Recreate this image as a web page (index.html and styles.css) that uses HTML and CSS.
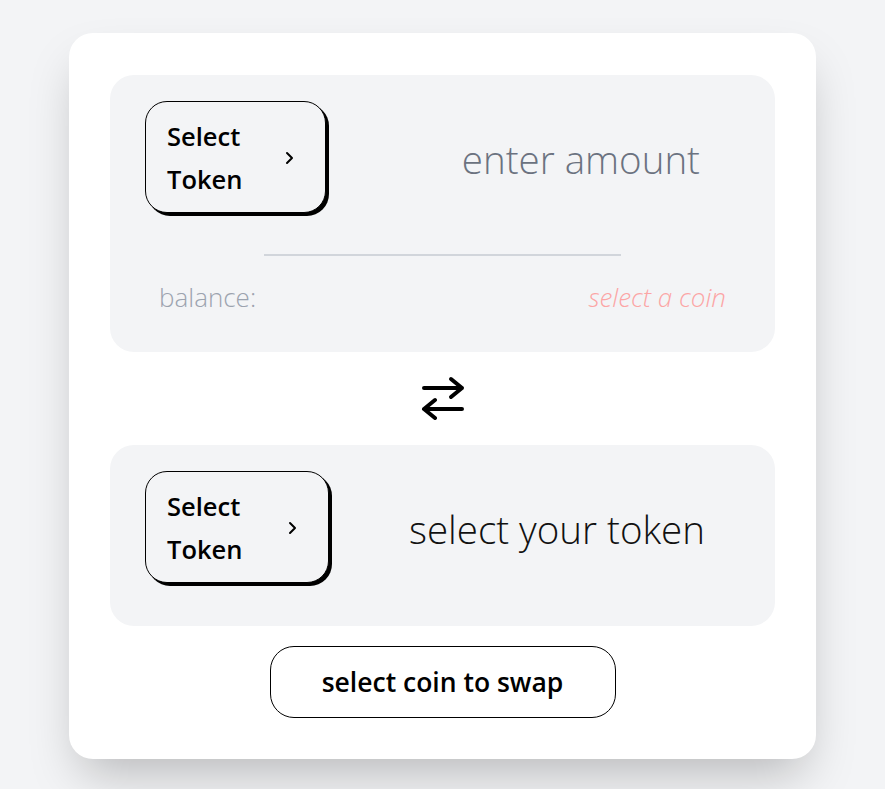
FILE: index.html
```html
<!DOCTYPE html>
<html lang="en">
<head>
<meta charset="utf-8">
<title>Swap</title>
<link rel="stylesheet" href="styles.css">
</head>
<body>
<div class="page">
  <div class="card">
    <div class="panel panel-from">
      <div class="panel-top">
        <button class="token-btn token-btn-a">
          <span class="token-label">Select<br>Token</span>
          <svg class="chev" width="10" height="14" viewBox="0 0 10 14"><path d="M2 2l5 5-5 5" fill="none" stroke="#000" stroke-width="2" stroke-linecap="round" stroke-linejoin="round"/></svg>
        </button>
        <div class="amount">enter amount</div>
      </div>
      <div class="divider"></div>
      <div class="balance-row">
        <span class="balance">balance:</span>
        <span class="select-coin">select a coin</span>
      </div>
    </div>
    <div class="swap-icon">
      <svg width="44" height="44" viewBox="0 0 44 44"><g fill="none" stroke="#000" stroke-width="4" stroke-linecap="round" stroke-linejoin="round"><path d="M3 12h38M30 3l11 9-11 9"/><path d="M3 33h38M14 24L3 33l11 9"/></g></svg>
    </div>
    <div class="panel panel-to">
      <div class="panel-top">
        <button class="token-btn token-btn-b">
          <span class="token-label">Select<br>Token</span>
          <svg class="chev" width="10" height="14" viewBox="0 0 10 14"><path d="M2 2l5 5-5 5" fill="none" stroke="#000" stroke-width="2" stroke-linecap="round" stroke-linejoin="round"/></svg>
        </button>
        <div class="target">select your token</div>
      </div>
    </div>
    <button class="submit">select coin to swap</button>
  </div>
</div>
</body>
</html>
```

FILE: styles.css
```css
body {
  margin: 0;
  background: #f3f4f6;
  font-family: "Open Sans", "Noto Sans", sans-serif;
}
.page {
  display: flex;
  justify-content: center;
  padding: 33px 0 40px;
}
.card {
  width: 747px;
  box-sizing: border-box;
  padding: 42px 41px 41px;
  background: #fff;
  border-radius: 24px;
  box-shadow: 0 25px 50px -12px rgba(0, 0, 0, 0.25);
  display: flex;
  flex-direction: column;
  align-items: center;
}
.panel {
  width: 100%;
  background: #f3f4f6;
  border-radius: 24px;
  box-sizing: border-box;
}
.panel-from {
  padding: 26px 0 37px;
}
.panel-to {
  padding: 26px 0 43px;
}
.panel-top {
  display: flex;
  align-items: center;
  padding: 0 35px;
}
.token-btn {
  height: 112px;
  box-sizing: border-box;
  border: 1px solid #000;
  border-radius: 22px;
  box-shadow: 3px 3px 0 #000;
  background: #f3f4f6;
  display: flex;
  align-items: center;
  justify-content: space-between;
  padding: 2px 30px 0 21px;
  font-family: inherit;
  font-weight: 600;
  font-size: 25.5px;
  line-height: 43px;
  color: #000;
  text-align: left;
  cursor: pointer;
}
.token-btn-a { width: 181px; }
.token-btn-b { width: 184px; }
.chev { display: block; }
.amount {
  flex: 1;
  text-align: right;
  padding: 3px 40px 0 0;
  font-weight: 300;
  font-size: 38.5px;
  color: #6b7280;
}
.target {
  flex: 1;
  text-align: right;
  padding: 4px 35px 0 0;
  font-weight: 300;
  font-size: 38.5px;
  color: #111;
}
.divider {
  width: 357px;
  height: 2px;
  background: #d1d5db;
  margin: 41px auto 0;
}
.balance-row {
  display: flex;
  justify-content: space-between;
  padding: 0 49px;
  margin-top: 23px;
  font-weight: 300;
  font-size: 26px;
  line-height: 36px;
}
.balance { color: #9ca3af; }
.select-coin { color: #fca5a5; font-style: italic; }
.swap-icon {
  margin: 24px 0 25px;
  height: 44px;
}
.swap-icon svg { display: block; }
.submit {
  margin-top: 20px;
  width: 346px;
  height: 72px;
  border: 1px solid #000;
  border-radius: 24px;
  background: #fff;
  font-family: inherit;
  font-weight: 600;
  font-size: 26.5px;
  color: #000;
  cursor: pointer;
}
```
